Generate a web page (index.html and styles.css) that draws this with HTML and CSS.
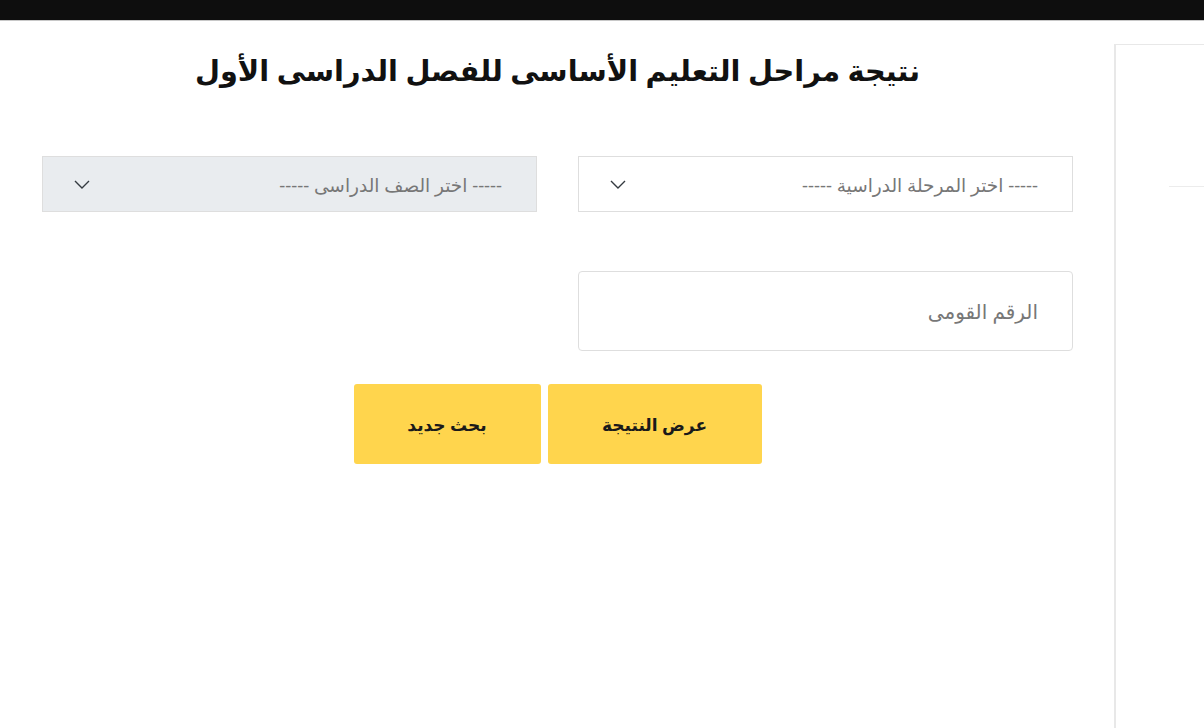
FILE: index.html
```html
<!DOCTYPE html>
<html lang="ar" dir="rtl">
<head>
<meta charset="utf-8">
<title>نتيجة مراحل التعليم الأساسى</title>
<link rel="stylesheet" href="styles.css">
</head>
<body>
<div class="topbar"></div>
<div class="layout">
  <aside class="sidebar">
    <div class="side-line"></div>
  </aside>
  <main class="main">
    <h1 class="title">نتيجة مراحل التعليم الأساسى للفصل الدراسى الأول</h1>
    <div class="row-selects">
      <div class="select">
        <span class="select-text">----- اختر المرحلة الدراسية -----</span>
        <svg class="chev" width="16" height="9" viewBox="0 0 16 9"><path d="M1 1 L8 8 L15 1" fill="none" stroke="#343a40" stroke-width="1.4"/></svg>
      </div>
      <div class="select disabled">
        <span class="select-text">----- اختر الصف الدراسى -----</span>
        <svg class="chev" width="16" height="9" viewBox="0 0 16 9"><path d="M1 1 L8 8 L15 1" fill="none" stroke="#343a40" stroke-width="1.4"/></svg>
      </div>
    </div>
    <div class="row-input">
      <input class="nid" type="text" placeholder="الرقم القومى">
    </div>
    <div class="row-buttons">
      <button class="btn btn-show">عرض النتيجة</button>
      <button class="btn btn-new">بحث جديد</button>
    </div>
  </main>
</div>
</body>
</html>
```
FILE: styles.css
```css
html, body {
  margin: 0;
  padding: 0;
  background: #ffffff;
}
body {
  font-family: "Noto Sans", "DejaVu Sans", sans-serif;
  direction: rtl;
  overflow: hidden;
  height: 728px;
}
.topbar {
  height: 21px;
  background: #0e0e0e;
  border-bottom: 1px solid #c8c8c8;
  box-sizing: border-box;
}
.layout {
  display: flex;
  align-items: flex-start;
}
.sidebar {
  flex: 0 0 90px;
  box-sizing: border-box;
  margin-top: 23px;
  height: 700px;
  border-top: 1px solid #e8e8e8;
  border-left: 2px solid #e8e8e8;
}
.side-line {
  margin-top: 141px;
  margin-left: 53px;
  border-top: 1px solid #ececec;
}
.main {
  flex: 0 0 1031px;
  margin-right: 41px;
  display: flex;
  flex-direction: column;
}
.title {
  margin: 0;
  padding-top: 27px;
  text-align: center;
  font-size: 28.8px;
  font-weight: 700;
  color: #111;
  line-height: 44px;
}
.row-selects {
  display: flex;
  gap: 41px;
  margin-top: 64px;
}
.select {
  flex: 0 0 495px;
  height: 56px;
  box-sizing: border-box;
  border: 1px solid #dedede;
  background: #fff;
  display: flex;
  align-items: center;
  justify-content: space-between;
  padding-right: 34px;
  padding-left: 31px;
}
.select.disabled {
  background: #e9ecef;
}
.select-text {
  font-size: 18.5px;
  color: #777;
}
.chev {
  display: block;
}
.row-input {
  margin-top: 59px;
  display: flex;
}
.nid {
  width: 495px;
  height: 80px;
  box-sizing: border-box;
  border: 1px solid #dedede;
  border-radius: 4px;
  padding: 0 34px;
  font-family: inherit;
  font-size: 20px;
  color: #333;
  direction: rtl;
  outline: none;
}
.nid::placeholder {
  color: #777;
}
.row-buttons {
  margin-top: 33px;
  display: flex;
  justify-content: center;
  gap: 7px;
}
.btn {
  height: 80px;
  border: none;
  border-radius: 3px;
  background: #ffd54d;
  font-family: inherit;
  font-size: 17px;
  font-weight: 700;
  color: #1a1a1a;
  padding: 0;
}
.btn-show { width: 214px; }
.btn-new { width: 187px; }
```
